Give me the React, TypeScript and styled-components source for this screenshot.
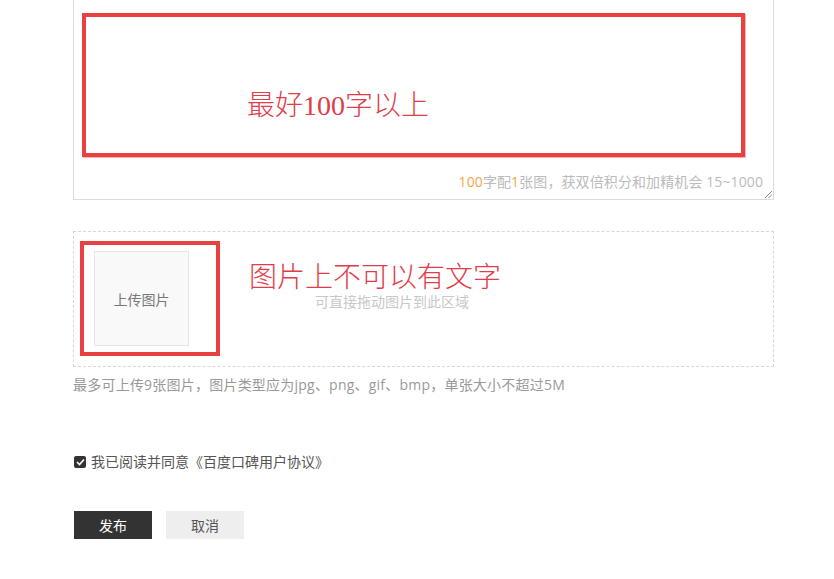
import React from 'react'
import styled, { createGlobalStyle } from 'styled-components'

const GlobalStyle = createGlobalStyle`
  html, body {
    margin: 0;
    padding: 0;
    background: #fff;
  }
  body {
    font-family: "Open Sans", "Noto Sans CJK SC", sans-serif;
    font-size: 14px;
    color: #555;
  }
`

const Page = styled.div`
  width: 701px;
  padding-left: 73px;
  display: flex;
  flex-direction: column;
`

const TextBox = styled.div`
  position: relative;
  box-sizing: border-box;
  height: 200px;
  border: 1px solid #dcdcdc;
  border-top: none;
  padding: 13px 10px 0 8px;
  display: flex;
  flex-direction: column;
`

const NoteFrame = styled.div<{ $thick?: number }>`
  box-sizing: border-box;
  border: ${({ $thick }) => $thick ?? 4}px solid #e8413f;
`

const TextNote = styled(NoteFrame)`
  width: 663px;
  height: 144px;
  padding: 75px 0 0 161px;
  box-shadow: 1px 1px 0 #f4b4b4;
`

const RedText = styled.div`
  font-family: "Liberation Serif", "Noto Sans CJK SC", serif;
  font-weight: 300;
  font-size: 28px;
  line-height: 28px;
  color: #e23c48;
  white-space: nowrap;
`

const Counter = styled.div`
  margin-top: 15px;
  align-self: flex-end;
  font-size: 14px;
  line-height: 20px;
  letter-spacing: 0.1px;
  color: #bbb;
`

const Hot = styled.span`
  color: #f4a64a;
`

const Grip = styled.svg`
  position: absolute;
  right: 1px;
  bottom: 1px;
`

const DropZone = styled.div`
  box-sizing: border-box;
  margin-top: 31px;
  height: 136px;
  border: 1px dashed #d8d8d8;
  padding: 19px 20px;
  display: flex;
  align-items: flex-start;
`

const Tile = styled.div`
  position: relative;
  box-sizing: border-box;
  width: 95px;
  height: 95px;
  flex: none;
  border: 1px solid #e6e6e6;
  background: #f9f9f9;
  display: flex;
  align-items: center;
  justify-content: center;
  color: #777;
  font-size: 14px;
`

const TileNote = styled(NoteFrame)`
  position: absolute;
  top: -11px;
  left: -15px;
  width: 140px;
  height: 115px;
`

const DropText = styled.div`
  margin: 13px 0 0 60px;
  display: flex;
  flex-direction: column;
`

const DropHint = styled.div`
  margin-left: 66px;
  font-size: 14px;
  line-height: 20px;
  color: #c8c8c8;
`

const Info = styled.div`
  margin-top: 8px;
  font-size: 14px;
  line-height: 20px;
  letter-spacing: 0.22px;
  color: #999;
`

const AgreeRow = styled.label`
  margin: 57px 0 0 1px;
  display: flex;
  align-items: center;
  gap: 5px;
  font-size: 14px;
  line-height: 20px;
  color: #555;
`

const Check = styled.span`
  width: 12px;
  height: 12px;
  border-radius: 2px;
  background: #333;
  display: flex;
  align-items: center;
  justify-content: center;
`

const Actions = styled.div`
  margin: 39px 0 0 1px;
  display: flex;
  gap: 14px;
`

const Button = styled.button<{ $primary?: boolean }>`
  width: 78px;
  height: 28px;
  border: none;
  padding: 0;
  font-family: inherit;
  font-size: 14px;
  background: ${({ $primary }) => ($primary ? '#333' : '#eee')};
  color: ${({ $primary }) => ($primary ? '#fff' : '#555')};
  cursor: pointer;
`

export default function App() {
  return (
    <>
      <GlobalStyle />
      <Page>
        <TextBox>
          <TextNote>
            <RedText>最好100字以上</RedText>
          </TextNote>
          <Counter>
            <Hot>100</Hot>字配<Hot>1</Hot>张图，获双倍积分和加精机会 15~1000
          </Counter>
          <Grip width="8" height="8" viewBox="0 0 8 8">
            <path d="M1 8 L8 1 M4.5 8 L8 4.5" stroke="#888" strokeWidth="1" />
          </Grip>
        </TextBox>

        <DropZone>
          <Tile>
            上传图片
            <TileNote $thick={4} />
          </Tile>
          <DropText>
            <RedText>图片上不可以有文字</RedText>
            <DropHint>可直接拖动图片到此区域</DropHint>
          </DropText>
        </DropZone>

        <Info>最多可上传9张图片，图片类型应为jpg、png、gif、bmp，单张大小不超过5M</Info>

        <AgreeRow>
          <Check>
            <svg width="9" height="8" viewBox="0 0 9 8">
              <path d="M1 4 L3.5 6.5 L8 1.5" fill="none" stroke="#fff" strokeWidth="1.6" />
            </svg>
          </Check>
          我已阅读并同意《百度口碑用户协议》
        </AgreeRow>

        <Actions>
          <Button $primary>发布</Button>
          <Button>取消</Button>
        </Actions>
      </Page>
    </>
  )
}
